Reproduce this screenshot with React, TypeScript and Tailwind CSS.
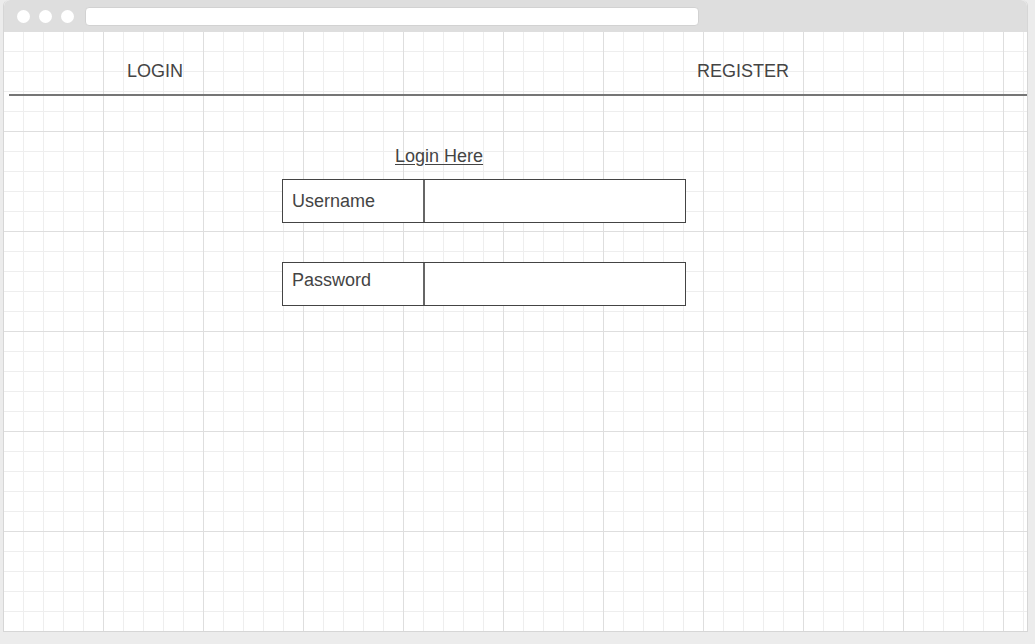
import React from 'react';

const App: React.FC = () => {
  return (
    <div className="w-[1035px] h-[644px] bg-[#ececec] font-['Liberation_Sans',Arial,sans-serif] overflow-hidden">
      <div className="w-[1025px] h-[632px] ml-[3px] flex flex-col rounded-t-[6px] border border-[#d6d6d6] border-t-0 bg-white">
        {/* browser chrome */}
        <div className="h-[32px] bg-[#dedede] rounded-t-[6px] flex items-center pl-[13px] gap-[9px] shrink-0">
          <div className="w-[13px] h-[13px] rounded-full bg-white" />
          <div className="w-[13px] h-[13px] rounded-full bg-white" />
          <div className="w-[13px] h-[13px] rounded-full bg-white" />
          <div className="ml-[2px] w-[614px] h-[19px] rounded-[4px] bg-white border border-[#d2d2d2]" />
        </div>

        {/* grid canvas */}
        <div className="flex-1 [background-image:linear-gradient(to_right,#dedede_1px,transparent_1px),linear-gradient(to_bottom,#dedede_1px,transparent_1px),linear-gradient(to_right,#eeeeee_1px,transparent_1px),linear-gradient(to_bottom,#eeeeee_1px,transparent_1px)] [background-size:100px_100px,100px_100px,20px_20px,20px_20px] [background-position:-1px_-1px] text-[#444]">
          {/* nav */}
          <div className="h-[62px] flex items-center text-[18px] pt-[17px]">
            <span className="ml-[123px]">LOGIN</span>
            <span className="ml-[514px]">REGISTER</span>
          </div>
          <div className="ml-[5px] h-[2px] bg-[#767676]" />

          {/* form */}
          <div className="ml-[278px] mt-[50px] w-[404px] text-[18px] text-[#444]">
            <div className="pl-[113px] leading-[20px]">
              <span className="underline underline-offset-[2px]">Login Here</span>
            </div>
            <div className="mt-[13px] flex h-[44px] border border-[#444] bg-white">
              <div className="w-[142px] flex items-center pl-[9px] border-r-2 border-[#666]">Username</div>
              <div className="flex-1" />
            </div>
            <div className="mt-[39px] flex h-[44px] border border-[#444] bg-white">
              <div className="w-[142px] pl-[9px] pt-[4px] border-r-2 border-[#666]">Password</div>
              <div className="flex-1" />
            </div>
          </div>
        </div>
      </div>
    </div>
  );
};

export default App;
